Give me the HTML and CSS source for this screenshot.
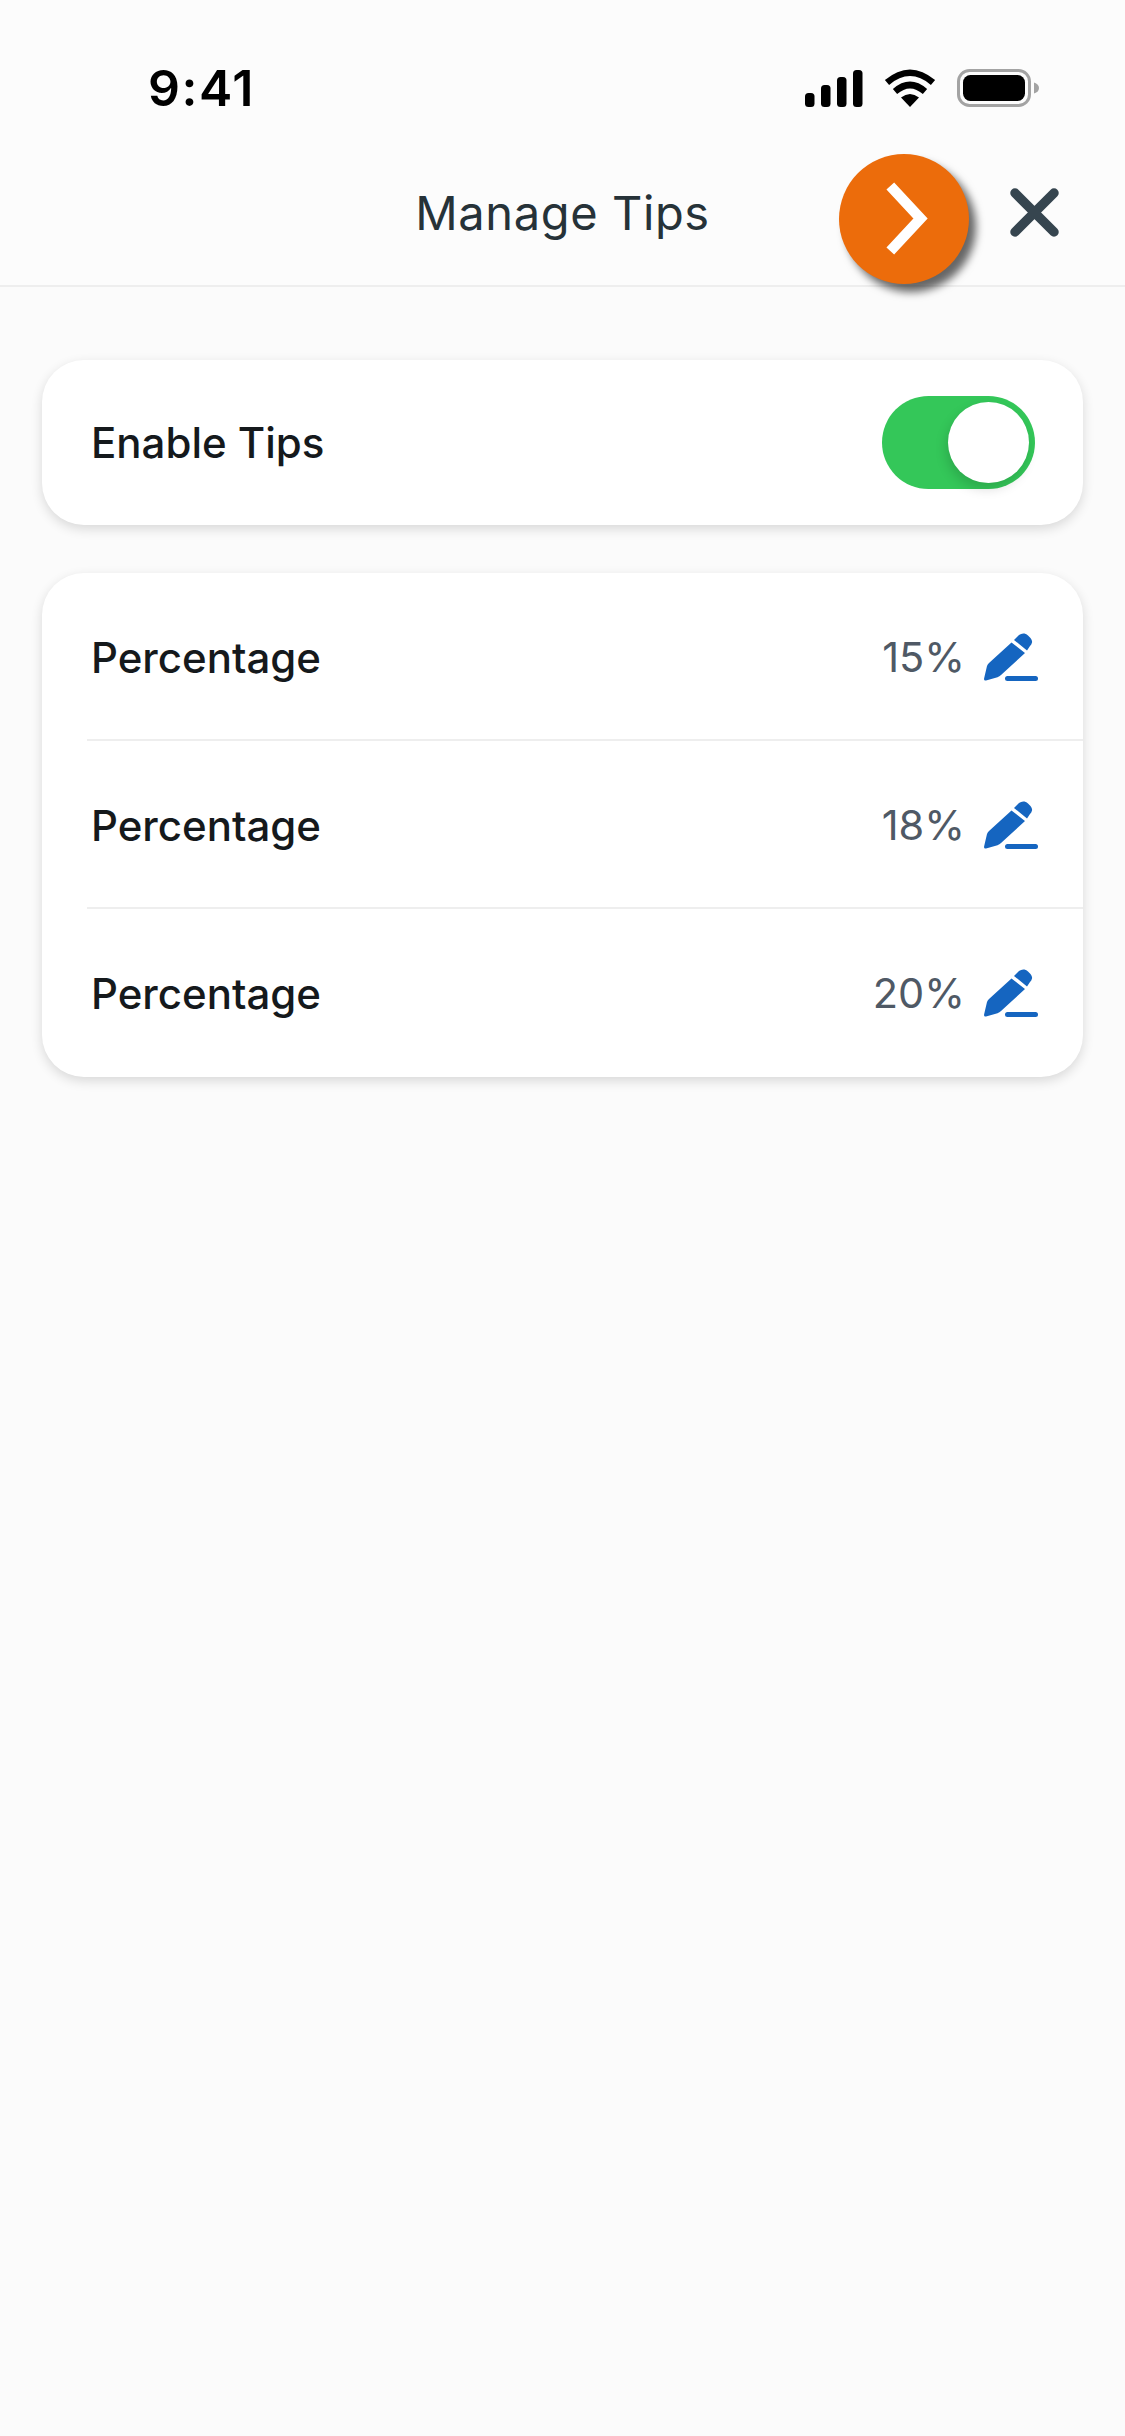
FILE: index.html
```html
<!DOCTYPE html>
<html lang="en">
<head>
    <meta charset="UTF-8">
    <meta name="viewport" content="width=device-width, initial-scale=1.0">
    <title>Manage Tips</title>
    <link rel="stylesheet" href="styles.css">
</head>
<body>
    <div class="status-bar">
        <span class="clock">9:41</span>
        <div class="status-icons">
            <svg class="signal" width="58" height="38" viewBox="0 0 58 38">
                <rect x="0" y="24" width="9.500" height="14" rx="3.500"/>
                <rect x="16" y="16" width="9.500" height="22" rx="3.500"/>
                <rect x="32" y="8" width="9.500" height="30" rx="3.500"/>
                <rect x="48" y="1" width="9.500" height="37" rx="3.500"/>
            </svg>
            <svg class="wifi" width="52" height="38" viewBox="0 0 52 38">
                <path d="M26 38 L17 28.500 Q26 21.500 35 28.500 Z"/>
                <path d="M11 22.500 Q26 9.500 41 22.500" fill="none" stroke="#000" stroke-width="6.500"/>
                <path d="M3 13.500 Q26 -6 49 13.500" fill="none" stroke="#000" stroke-width="6.500"/>
            </svg>
            <svg class="battery" width="83" height="38" viewBox="0 0 83 38">
                <rect x="1.500" y="1.500" width="71" height="35" rx="11" fill="none" stroke="#a3a3a3" stroke-width="3"/>
                <rect x="6" y="6" width="62" height="26" rx="7.500"/>
                <path d="M77 13.500 Q82 15 82 19 Q82 23 77 24.500 Z" fill="#a3a3a3"/>
            </svg>
        </div>
    </div>

    <div class="header">
        <h1 class="title">Manage Tips</h1>
        <div class="fab">
            <svg width="130" height="130" viewBox="0 0 130 130">
                <path d="M51.300 32 L81.500 64.500 L51.300 97" fill="none" stroke="#fff" stroke-width="10.500"/>
            </svg>
        </div>
        <svg class="close" width="49" height="49" viewBox="0 0 49 49">
            <path d="M5 5 L44 44 M44 5 L5 44" fill="none" stroke="#36454f" stroke-width="9.500" stroke-linecap="round"/>
        </svg>
    </div>

    <div class="content">
        <div class="card toggle-row">
            <span class="label">Enable Tips</span>
            <div class="switch"><div class="knob"></div></div>
        </div>

        <div class="card">
            <div class="row">
                <span class="label">Percentage</span>
                <div class="row-value">
                    <span class="percent">15%</span>
                    <svg class="pencil" width="54" height="48" viewBox="0 0 54 48">
                        <path d="M30 7 L35 2 Q37.500 0 40.500 0.500 Q42.500 1 44 2.500 L46.500 5 Q48.500 7.500 48 9.500 Q47.500 11.500 46 13 L43 17.500 Z"/>
                        <path d="M27.500 9.500 L41 20 L17 42 Q15.500 43.500 13.500 44.200 L2 47.500 Q-0.500 48 0.200 45 L3 33 Q3.500 31.500 5 30 Z"/>
                        <rect x="21" y="43" width="33" height="5" rx="2.500"/>
                    </svg>
                </div>
            </div>
            <div class="row">
                <span class="label">Percentage</span>
                <div class="row-value">
                    <span class="percent">18%</span>
                    <svg class="pencil" width="54" height="48" viewBox="0 0 54 48">
                        <path d="M30 7 L35 2 Q37.500 0 40.500 0.500 Q42.500 1 44 2.500 L46.500 5 Q48.500 7.500 48 9.500 Q47.500 11.500 46 13 L43 17.500 Z"/>
                        <path d="M27.500 9.500 L41 20 L17 42 Q15.500 43.500 13.500 44.200 L2 47.500 Q-0.500 48 0.200 45 L3 33 Q3.500 31.500 5 30 Z"/>
                        <rect x="21" y="43" width="33" height="5" rx="2.500"/>
                    </svg>
                </div>
            </div>
            <div class="row">
                <span class="label">Percentage</span>
                <div class="row-value">
                    <span class="percent">20%</span>
                    <svg class="pencil" width="54" height="48" viewBox="0 0 54 48">
                        <path d="M30 7 L35 2 Q37.500 0 40.500 0.500 Q42.500 1 44 2.500 L46.500 5 Q48.500 7.500 48 9.500 Q47.500 11.500 46 13 L43 17.500 Z"/>
                        <path d="M27.500 9.500 L41 20 L17 42 Q15.500 43.500 13.500 44.200 L2 47.500 Q-0.500 48 0.200 45 L3 33 Q3.500 31.500 5 30 Z"/>
                        <rect x="21" y="43" width="33" height="5" rx="2.500"/>
                    </svg>
                </div>
            </div>
        </div>
    </div>
</body>
</html>
```

FILE: styles.css
```css
* { margin: 0; padding: 0; box-sizing: border-box; }
body {
    font-family: Inter, 'Liberation Sans', sans-serif;
    background: #fbfbfb;
    width: 1125px;
    height: 2436px;
    overflow: hidden;
}
.status-bar {
    height: 132px;
    padding: 0 85px 0 148px;
    display: flex;
    justify-content: space-between;
    align-items: flex-start;
    background: #fcfcfc;
}
.clock {
    margin-top: 59px;
    font-size: 50px;
    line-height: 58px;
    font-weight: 600;
    color: #000;
    letter-spacing: 1.500px;
}
.status-icons {
    margin-top: 69px;
    display: flex;
    align-items: center;
    gap: 21px;
}
.status-icons svg { display: block; }
.header {
    position: relative;
    height: 155px;
    padding-top: 8px;
    border-bottom: 2px solid #eeeeee;
    background: #fcfcfc;
    display: flex;
    justify-content: center;
    align-items: center;
}
.title {
    font-size: 47px;
    font-weight: 400;
    color: #263238;
    letter-spacing: 0.600px;
}
.fab {
    position: absolute;
    left: 839px;
    top: 22px;
    width: 130px;
    height: 130px;
    border-radius: 50%;
    background: #ec6c0b;
    box-shadow: 7px 8px 9px rgba(0, 0, 0, 0.6);
}
.fab svg { display: block; }
.close {
    position: absolute;
    left: 1010px;
    top: 56px;
}
.content {
    padding: 73px 42px 0;
    display: flex;
    flex-direction: column;
    gap: 48px;
}
.card {
    background: #fff;
    border-radius: 42px;
    box-shadow: 0 4px 12px rgba(0, 0, 0, 0.14);
}
.toggle-row {
    height: 165px;
    padding: 0 48px 0 49px;
    display: flex;
    justify-content: space-between;
    align-items: center;
}
.label {
    font-size: 42px;
    font-weight: 500;
    color: #15191c;
}
.switch {
    width: 153px;
    height: 93px;
    border-radius: 47px;
    background: #34c759;
    padding: 6px;
    display: flex;
    justify-content: flex-end;
}
.knob {
    width: 81px;
    height: 81px;
    border-radius: 50%;
    background: #fff;
    box-shadow: -2px 6px 12px rgba(0, 0, 0, 0.15);
}
.row {
    height: 168px;
    margin-left: 45px;
    padding-top: 2px;
    padding-right: 45px;
    border-bottom: 2px solid #eeeeee;
    display: flex;
    justify-content: space-between;
    align-items: center;
}
.row:last-child { border-bottom: none; padding-top: 0; }
.row .label { margin-left: 4px; }
.row-value {
    display: flex;
    align-items: center;
    gap: 19px;
}
.percent {
    font-size: 41.500px;
    color: #4f5965;
}
.pencil { display: block; fill: #1565c0; }
```
